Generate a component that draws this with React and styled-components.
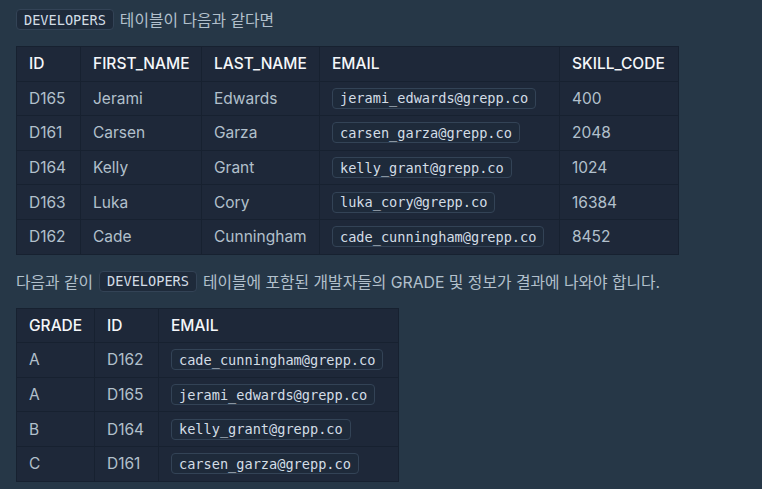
import React from 'react';
import styled, { createGlobalStyle } from 'styled-components';

const GlobalStyle = createGlobalStyle`
  html, body {
    margin: 0;
    padding: 0;
    background: #263747;
  }
  body {
    font-family: Inter, "Noto Sans CJK KR", sans-serif;
  }
`;

const Page = styled.div`
  padding: 9px 16px 8px;
  color: #b2c0cc;
`;

const Sentence = styled.p`
  display: flex;
  align-items: center;
  gap: 6px;
  margin: 0 0 16px;
  height: 21px;
  font-family: Inter, "Noto Sans CJK KR", sans-serif;
  font-size: 15.8px;
  color: #b2c0cc;
  white-space: nowrap;
`;

const Code = styled.code`
  display: inline-flex;
  align-items: center;
  height: 21px;
  box-sizing: border-box;
  padding: 0 7px;
  border: 1px solid #334356;
  border-radius: 4px;
  background: #1e2a3a;
  color: #d3dde6;
  font-family: "DejaVu Sans Mono", monospace;
  font-size: 13.6px;
`;

const Table = styled.table`
  width: ${(p) => p.$width}px;
  border-collapse: collapse;
  table-layout: fixed;
  background: #1e2839;
  border: 1px solid #172130;
  margin-bottom: ${(p) => p.$gap || '0'};
  font-size: 15.5px;
`;

const Row = styled.tr`
  height: 34.6px;
`;

const Head = styled.th`
  border: 1px solid #172130;
  padding: 0 12px;
  text-align: left;
  font-weight: 500;
  color: #f5f7fa;
  white-space: nowrap;
`;

const Cell = styled.td`
  border: 1px solid #172130;
  padding: 0 12px;
  color: #b2c0cc;
  white-space: nowrap;
`;

const developers = [
  ['D165', 'Jerami', 'Edwards', 'jerami_edwards@grepp.co', '400'],
  ['D161', 'Carsen', 'Garza', 'carsen_garza@grepp.co', '2048'],
  ['D164', 'Kelly', 'Grant', 'kelly_grant@grepp.co', '1024'],
  ['D163', 'Luka', 'Cory', 'luka_cory@grepp.co', '16384'],
  ['D162', 'Cade', 'Cunningham', 'cade_cunningham@grepp.co', '8452'],
];

const results = [
  ['A', 'D162', 'cade_cunningham@grepp.co'],
  ['A', 'D165', 'jerami_edwards@grepp.co'],
  ['B', 'D164', 'kelly_grant@grepp.co'],
  ['C', 'D161', 'carsen_garza@grepp.co'],
];

const App = () => (
  <Page>
    <GlobalStyle />
    <Sentence>
      <Code>DEVELOPERS</Code>
      <span>테이블이 다음과 같다면</span>
    </Sentence>

    <Table $width={663} $gap="16px">
      <colgroup>
        <col style={{ width: 64 }} />
        <col style={{ width: 121 }} />
        <col style={{ width: 118 }} />
        <col style={{ width: 240 }} />
        <col style={{ width: 119 }} />
      </colgroup>
      <thead>
        <Row>
          <Head>ID</Head>
          <Head>FIRST_NAME</Head>
          <Head>LAST_NAME</Head>
          <Head>EMAIL</Head>
          <Head>SKILL_CODE</Head>
        </Row>
      </thead>
      <tbody>
        {developers.map(([id, first, last, email, code]) => (
          <Row key={id}>
            <Cell>{id}</Cell>
            <Cell>{first}</Cell>
            <Cell>{last}</Cell>
            <Cell><Code>{email}</Code></Cell>
            <Cell>{code}</Cell>
          </Row>
        ))}
      </tbody>
    </Table>

    <Sentence>
      <span>다음과 같이</span>
      <Code>DEVELOPERS</Code>
      <span>테이블에 포함된 개발자들의 GRADE 및 정보가 결과에 나와야 합니다.</span>
    </Sentence>

    <Table $width={383}>
      <colgroup>
        <col style={{ width: 78 }} />
        <col style={{ width: 64 }} />
        <col style={{ width: 240 }} />
      </colgroup>
      <thead>
        <Row>
          <Head>GRADE</Head>
          <Head>ID</Head>
          <Head>EMAIL</Head>
        </Row>
      </thead>
      <tbody>
        {results.map(([grade, id, email]) => (
          <Row key={id}>
            <Cell>{grade}</Cell>
            <Cell>{id}</Cell>
            <Cell><Code>{email}</Code></Cell>
          </Row>
        ))}
      </tbody>
    </Table>
  </Page>
);

export default App;
